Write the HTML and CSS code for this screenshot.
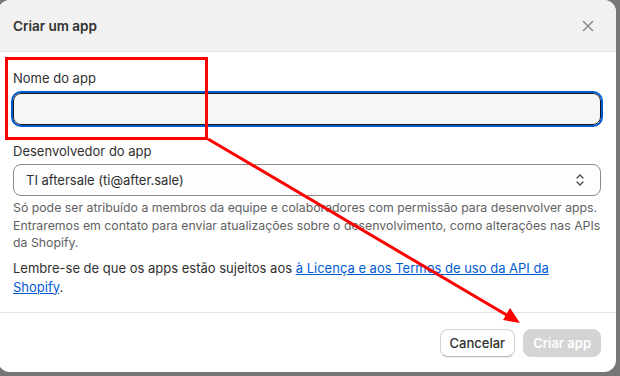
FILE: index.html
```html
<!DOCTYPE html>
<html lang="pt">
<head>
    <meta charset="UTF-8">
    <meta name="viewport" content="width=device-width, initial-scale=1.0">
    <title>Criar um app</title>
    <link rel="stylesheet" href="styles.css">
</head>
<body>
    <div class="modal">
        <div class="modal-header">
            <h2>Criar um app</h2>
            <button class="close-btn" aria-label="Fechar">
                <svg width="20" height="20" viewBox="0 0 20 20">
                    <path d="M5.5 5.5l9 9M14.5 5.5l-9 9" stroke="#8a8a8a" stroke-width="1.5" stroke-linecap="round"/>
                </svg>
            </button>
        </div>
        <div class="modal-body">
            <div class="field">
                <label class="field-label">Nome do app</label>
                <div class="text-input focused"></div>
            </div>
            <div class="field">
                <label class="field-label">Desenvolvedor do app</label>
                <div class="select">
                    <span>TI aftersale (ti@after.sale)</span>
                    <svg width="20" height="20" viewBox="0 0 20 20">
                        <path d="M7 8l3-3 3 3M7 12l3 3 3-3" fill="none" stroke="#4a4a4a" stroke-width="1.3" stroke-linecap="round" stroke-linejoin="round"/>
                    </svg>
                </div>
                <p class="help-text">Só pode ser atribuído a membros da equipe e colaboradores com permissão para desenvolver apps. Entraremos em contato para enviar atualizações sobre o desenvolvimento, como alterações nas APIs da Shopify.</p>
            </div>
            <p class="note">Lembre-se de que os apps estão sujeitos aos <a href="#">à Licença e aos Termos de uso da API da Shopify</a>.</p>
        </div>
        <div class="modal-footer">
            <button class="btn">Cancelar</button>
            <button class="btn btn-primary" disabled>Criar app</button>
        </div>
    </div>

    <!-- anotação em vermelho por cima da captura -->
    <svg class="annotation" width="620" height="376" viewBox="0 0 620 376">
        <rect x="6.5" y="58.5" width="200" height="80" fill="none" stroke="#f00" stroke-width="3"/>
        <line x1="208" y1="139" x2="510" y2="317" stroke="#f00" stroke-width="3"/>
        <polygon points="520,323 503,320 510,308" fill="#f00"/>
    </svg>
</body>
</html>
```

FILE: styles.css
```css
body {
    margin: 0;
    width: 620px;
    height: 376px;
    overflow: hidden;
    background: #767676;
    font-family: Inter, "Noto Sans", sans-serif;
    font-size: 13px;
    color: #303030;
    position: relative;
}
.modal {
    margin-left: -2px;
    width: 618px;
    height: 372px;
    background: #fff;
    border-radius: 12px;
    overflow: hidden;
    display: flex;
    flex-direction: column;
}
.modal-header {
    height: 51px;
    flex-shrink: 0;
    display: flex;
    align-items: center;
    justify-content: space-between;
    padding: 0 15px;
    background: #f1f1f1;
    border-bottom: 1px solid #e3e3e3;
}
.modal-header h2 {
    margin: 0;
    font-size: 13.5px;
    font-weight: 600;
    color: #303030;
}
.close-btn {
    background: none;
    border: none;
    padding: 0;
    width: 20px;
    height: 20px;
    margin-right: 3px;
    cursor: pointer;
}
.modal-body {
    flex: 1;
    padding: 16px 15px 0 15px;
    display: flex;
    flex-direction: column;
}
.field {
    display: flex;
    flex-direction: column;
}
.field + .field {
    margin-top: 15px;
}
.field-label {
    line-height: 20px;
    margin-bottom: 4px;
    color: #303030;
}
.field + .field .field-label {
    margin-bottom: 3px;
}
.text-input {
    height: 30px;
    border: 1px solid #1a1a1a;
    border-radius: 8px;
    background: #f6f6f6;
    margin: 1px 0;
}
.text-input.focused {
    outline: 2px solid #005bd3;
    outline-offset: 0;
}
.select {
    height: 30px;
    border: 1px solid #8a8a8a;
    border-radius: 8px;
    background: #fdfdfd;
    display: flex;
    align-items: center;
    justify-content: space-between;
    padding: 0 10px 0 12px;
}
.help-text {
    margin: 3px 0 0 0;
    font-size: 12.3px;
    line-height: 17.5px;
    color: #616161;
}
.note {
    margin: 7px 0 0 0;
    line-height: 19px;
}
.note a {
    color: #005bd3;
}
.modal-footer {
    height: 59px;
    flex-shrink: 0;
    border-top: 1px solid #e3e3e3;
    display: flex;
    align-items: center;
    justify-content: flex-end;
    gap: 8px;
    padding: 0 15px;
}
.btn {
    height: 28px;
    padding: 0 9px;
    border: 1px solid #d4d4d4;
    border-bottom-color: #b5b5b5;
    border-radius: 8px;
    background: #fff;
    font-family: inherit;
    font-size: 13px;
    font-weight: 500;
    color: #303030;
    box-shadow: 0 1px 0 rgba(0, 0, 0, 0.05);
}
.btn-primary {
    background: #d4d4d4;
    border-color: #d4d4d4;
    color: #fff;
    font-weight: 600;
    padding: 0 9px;
    box-shadow: none;
}
.annotation {
    position: absolute;
    top: 0;
    left: 0;
    pointer-events: none;
}
```
